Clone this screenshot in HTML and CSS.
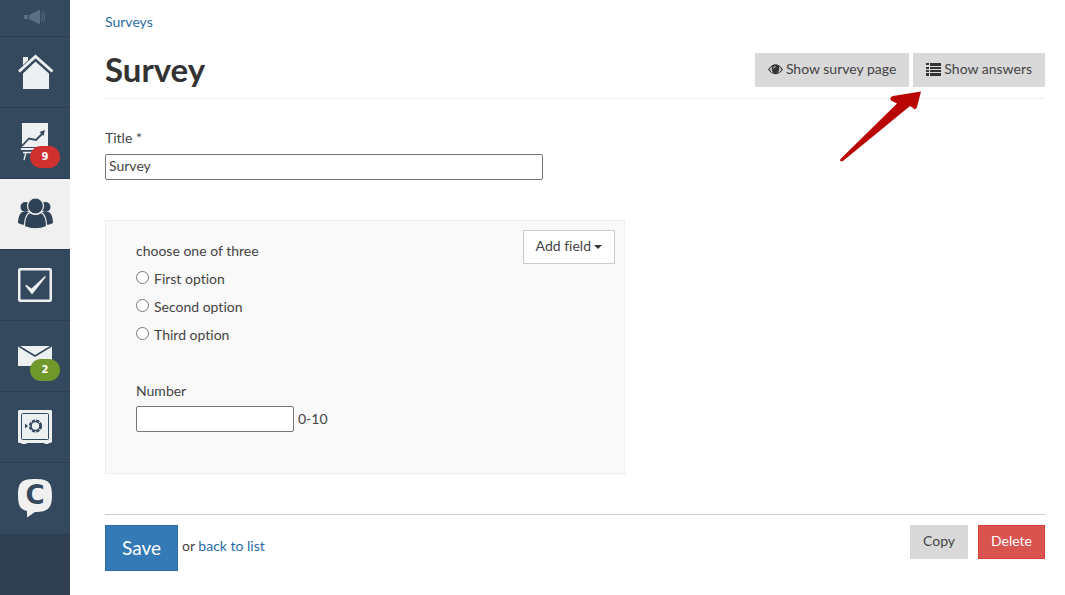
FILE: index.html
```html
<!DOCTYPE html>
<html lang="en">
<head>
<meta charset="utf-8">
<title>Survey</title>
<link rel="stylesheet" href="styles.css">
</head>
<body>
<div class="layout">
  <nav class="sidebar" aria-label="Main">
    <a class="nav-item nav-item-short" href="#" aria-label="News">
      <svg width="70" height="36" viewBox="0 0 70 36"><g fill="#5a6f86"><path d="M24 15h4v4h-4zM29 15l10-5h1v14h-1l-10-5z"/><path d="M41.500 13.500q2 3.500 0 7M43 11.500q3.500 5.500 0 11" fill="none" stroke="#5a6f86"/></g></svg>
    </a>
    <a class="nav-item" href="#" aria-label="Home">
      <svg width="70" height="70" viewBox="0 0 70 70"><path d="M23 20h5v5l-5 5z" fill="#ecf0f1"/><path d="M23 36.500l12.500-12L49 36.500V52H23z" fill="#ecf0f1"/><path d="M18.500 35.500L35.500 20l17 15.500" fill="none" stroke="#34495e" stroke-width="5"/><path d="M19 34.500L35.500 19.500 52.500 34.500" fill="none" stroke="#ecf0f1" stroke-width="3"/></svg>
    </a>
    <a class="nav-item" href="#" aria-label="Sales, 9 new">
      <svg width="70" height="70" viewBox="0 0 70 70"><path d="M22 15h26v24H22z" fill="#ecf0f1"/><path d="M22 38l7-7.500 7 1.500 7-7" fill="none" stroke="#34495e" stroke-width="1.800"/><path d="M39.500 24l5.500-2-1.500 6z" fill="#34495e"/><path d="M21 41h27" fill="none" stroke="#ecf0f1" stroke-width="2"/><path d="M23 44.500h20M26 44l-2 8" fill="none" stroke="#ecf0f1" stroke-width="1.300"/></svg>
      <span class="badge badge-red">9</span>
    </a>
    <a class="nav-item nav-item-active" href="#" aria-label="Contacts">
      <svg width="70" height="70" viewBox="0 0 70 70"><g fill="#2f4256"><circle cx="25.500" cy="28" r="5"/><circle cx="45.500" cy="28" r="5"/><path d="M22 33q-4 3-4 11 3 2 8 2l3-13zM49 33q4 3 4 11-3 2-8 2l-3-13z"/><path d="M29.500 33.500q-5 3-5 14 11 4.500 22 0 0-11-5-14-6 4-12 0z" stroke="#f0f0f0" stroke-width="1.200"/><circle cx="35.500" cy="27" r="8" stroke="#f0f0f0" stroke-width="1.200"/></g></svg>
    </a>
    <a class="nav-item" href="#" aria-label="Tasks">
      <svg width="70" height="70" viewBox="0 0 70 70"><rect x="19.250" y="19.250" width="31.500" height="31.500" rx="1" fill="none" stroke="#ecf0f1" stroke-width="2.500"/><path d="M25 35.500l1.500-.5 5 3.500L45.500 25.500v2L32 44.500z" fill="#ecf0f1"/></svg>
    </a>
    <a class="nav-item" href="#" aria-label="Mail, 2 new">
      <svg width="70" height="70" viewBox="0 0 70 70"><path d="M18 25h34v20H18z" fill="#ecf0f1"/><path d="M18.500 25L35 35 51.500 25" fill="none" stroke="#34495e" stroke-width="1.500"/></svg>
      <span class="badge badge-green">2</span>
    </a>
    <a class="nav-item" href="#" aria-label="Finance">
      <svg width="70" height="70" viewBox="0 0 70 70"><path d="M19 18h32l1 1v31l-1.500 1H49l-1 1h-3l-1-1H27l-1 1h-4l-1-1h-2l-1-1V19z" fill="#ecf0f1"/><rect x="21.500" y="21.500" width="27" height="26" rx="1" fill="none" stroke="#34495e"/><circle cx="35.500" cy="34" r="5.500" fill="none" stroke="#34495e" stroke-width="2.200" stroke-dasharray="3.300 1.020"/><circle cx="35.500" cy="34" r="4.400" fill="none" stroke="#34495e" stroke-width="1.400"/><path d="M25 31.500l3 2.500-3 2.500z" fill="#34495e"/></svg>
    </a>
    <a class="nav-item" href="#" aria-label="Chat">
      <svg width="70" height="70" viewBox="0 0 70 70"><path d="M35 16c13 0 17 3 17 16.500S47 49 35 49l-8 5.500V48c-7-1.500-9-6-9-15.500C18 19 22 16 35 16z" fill="#f0f0f0"/><text class="logo-letter" x="35" y="41" text-anchor="middle">C</text></svg>
    </a>
  </nav>

  <main class="content">
    <a class="breadcrumb" href="#">Surveys</a>
    <header class="page-header">
      <h1>Survey</h1>
      <div class="header-actions">
        <button class="btn" type="button">
          <svg width="15" height="13" viewBox="0 0 15 13"><path d="M0 6.500Q7.500-4 15 6.500 7.500 16 0 6.500z" fill="#333"/><path d="M1.500 6.500q1-2 2.500-3-1 5 2 6.500-3-.5-4.500-3.500zM13.500 6.500q-1-2-2.500-3 1 5-2 6.500 3-.5 4.500-3.500z" fill="#d9d9d9"/><path d="M5.500 5.500q.3-2 2.200-2" fill="none" stroke="#d9d9d9"/></svg>
          Show survey page
        </button>
        <button class="btn" type="button">
          <svg width="15" height="13" viewBox="0 0 15 13"><path d="M0 0h3v2H0zM4 0h11v3H4zM0 4h3v2H0zM4 4h11v2H4zM0 7h3v2H0zM4 7h11v2H4zM0 10h3v3H0zM4 10h11v3H4z" fill="#333"/></svg>
          Show answers
        </button>
        <svg class="pointer" width="84" height="72" viewBox="0 0 84 72"><path d="M1.500 69L58 13.500l-6-3Q50 7 54 6L82 1.500 78 17q-1.500 4-4 1l-3-2L4 71q-4 1-2.500-2z" fill="#b90504"/></svg>
      </div>
    </header>

    <form>
      <div class="title-field">
        <label for="title">Title *</label>
        <input class="text-input" id="title" type="text" value="Survey">
      </div>

      <section class="panel">
        <button class="btn btn-outline add-field" type="button">Add field <span class="caret"></span></button>
        <fieldset class="choices">
          <legend>choose one of three</legend>
          <label class="choice"><input type="radio" name="choice">First option</label>
          <label class="choice"><input type="radio" name="choice">Second option</label>
          <label class="choice"><input type="radio" name="choice">Third option</label>
        </fieldset>
        <label for="number">Number</label>
        <div class="number-row">
          <input class="text-input number-input" id="number" type="text">
          <span>0-10</span>
        </div>
      </section>

      <footer class="form-actions">
        <button class="btn btn-save" type="submit">Save</button>
        <span class="back">or <a href="#">back to list</a></span>
        <button class="btn btn-copy" type="button">Copy</button>
        <button class="btn btn-danger" type="button">Delete</button>
      </footer>
    </form>
  </main>
</div>
</body>
</html>
```
FILE: styles.css
```css
* { box-sizing: border-box; }

body {
  margin: 0;
  background: #fff;
  color: #444;
  font: 14px/28px Lato, "Open Sans", sans-serif;
  font-variant-ligatures: none;
}

a { color: #2a6ca5; text-decoration: none; }
button, input { font: inherit; color: inherit; }

.layout { display: flex; min-height: 100vh; }

.sidebar { flex: none; width: 70px; background: #2f3f50; }
.nav-item {
  display: block;
  position: relative;
  height: 71px;
  background: #34495e;
  border-bottom: 1px solid #2b3d50;
}
.nav-item:last-child { border-bottom-color: #34495e; }
.nav-item svg { display: block; }
.nav-item-short { height: 37px; }
.nav-item-active { background: #f0f0f0; }
.logo-letter { font: bold 26px "DejaVu Sans", sans-serif; fill: #34495e; }

.badge {
  position: absolute;
  top: 38px;
  left: 30px;
  width: 30px;
  border-radius: 11px;
  color: #fff;
  font: bold 10px/22px "DejaVu Sans", sans-serif;
  text-align: center;
}
.badge-red { background: #d0312f; }
.badge-green { background: #70982b; }

.content { flex: 1; min-width: 0; padding: 8px 20px 24px 35px; }
.breadcrumb { display: block; }

.page-header {
  display: flex;
  justify-content: space-between;
  align-items: flex-start;
  padding: 17px 0 11px;
  border-bottom: 1px solid #eee;
}
h1 { margin: 0; color: #333; font-size: 33px; line-height: 32px; }
.header-actions { display: flex; gap: 4px; position: relative; }
.pointer { position: absolute; top: 37px; right: 122px; }

.btn {
  display: inline-flex;
  align-items: center;
  justify-content: center;
  gap: 3px;
  height: 34px;
  padding: 0 12px 2px;
  border: 1px solid #d9d9d9;
  background: #d9d9d9;
  white-space: nowrap;
}

.title-field { display: flex; flex-direction: column; margin: 25px 0 40px; }
.text-input {
  width: 438px;
  max-width: 100%;
  height: 26px;
  padding: 0 3px 2px;
  border: 1px solid #767676;
  border-radius: 2px;
  background: #fff;
}
.title-field .text-input { margin-top: 2px; }

.panel {
  position: relative;
  max-width: 520px;
  padding: 16px 30px 40px;
  border: 1px solid #eee;
  background: #f9f9f9;
}
.btn-outline { border-color: #ccc; background: #fff; }
.add-field { position: absolute; top: 9px; right: 9px; }
.caret {
  margin-top: 2px;
  border-top: 4px solid #333;
  border-left: 4px solid transparent;
  border-right: 4px solid transparent;
}

.choices { margin: 0 0 28px; padding: 0; border: 0; }
.choices legend { padding: 0; }
.choice { display: flex; gap: 5px; }
.choice input { width: 13px; height: 13px; margin: 6px 0 0; }
.number-row { display: flex; align-items: center; gap: 4px; }
.number-input { width: 158px; }

.form-actions {
  display: flex;
  align-items: flex-start;
  margin-top: 40px;
  padding-top: 10px;
  border-top: 1px solid #ccc;
}
.btn-save {
  height: 46px;
  padding: 0 16px;
  border-color: #2e6da4;
  background: #337ab7;
  color: #fff;
  font-size: 19px;
}
.back { margin: 7px auto 0 4px; }
.btn-danger { margin-left: 10px; border-color: #d43f3a; background: #d9534f; color: #fff; }
```
